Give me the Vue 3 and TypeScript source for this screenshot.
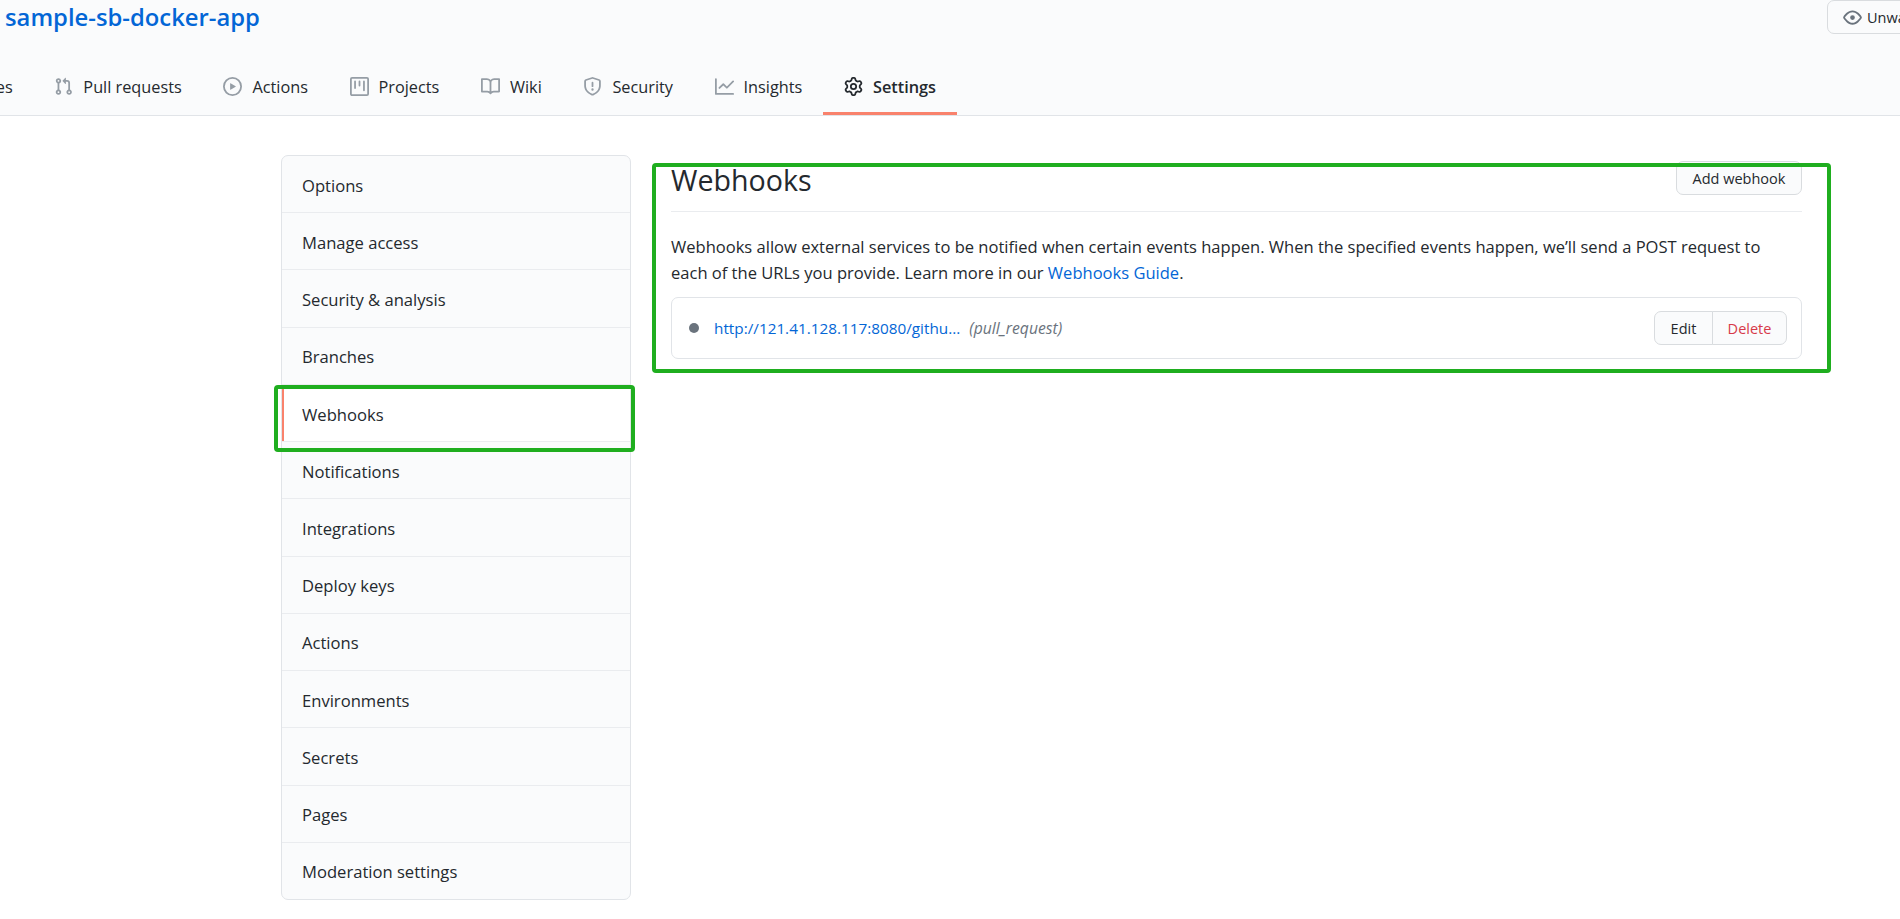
<script setup lang="ts">
interface Tab {
  name: string;
  path: string;
  active?: boolean;
}

const tabs: Tab[] = [
  { name: 'Issues', path: 'M8 9.5a1.5 1.5 0 100-3 1.5 1.5 0 000 3zM8 0a8 8 0 100 16A8 8 0 008 0zM1.5 8a6.5 6.5 0 1113 0 6.5 6.5 0 01-13 0z' },
  { name: 'Pull requests', path: 'M7.177 3.073L9.573.677A.25.25 0 0110 .854v4.792a.25.25 0 01-.427.177L7.177 3.427a.25.25 0 010-.354zM3.75 2.5a.75.75 0 100 1.5.75.75 0 000-1.5zm-2.25.75a2.25 2.25 0 113 2.122v5.256a2.251 2.251 0 11-1.5 0V5.372A2.25 2.25 0 011.5 3.25zM11 2.5h-1V4h1a1 1 0 011 1v5.628a2.251 2.251 0 101.5 0V5A2.5 2.5 0 0011 2.5zm1 10.25a.75.75 0 111.5 0 .75.75 0 01-1.5 0zM3.75 12a.75.75 0 100 1.5.75.75 0 000-1.5z' },
  { name: 'Actions', path: 'M1.5 8a6.5 6.5 0 1113 0 6.5 6.5 0 01-13 0zM8 0a8 8 0 100 16A8 8 0 008 0zM6.379 5.227A.25.25 0 006 5.442v5.117a.25.25 0 00.379.214l4.264-2.559a.25.25 0 000-.428L6.379 5.227z' },
  { name: 'Projects', path: 'M1.75 0A1.75 1.75 0 000 1.75v12.5C0 15.216.784 16 1.75 16h12.5A1.75 1.75 0 0016 14.25V1.75A1.75 1.75 0 0014.25 0H1.75zM1.5 1.75a.25.25 0 01.25-.25h12.5a.25.25 0 01.25.25v12.5a.25.25 0 01-.25.25H1.75a.25.25 0 01-.25-.25V1.75zM11.75 3a.75.75 0 00-.75.75v7.5a.75.75 0 001.5 0v-7.5a.75.75 0 00-.75-.75zm-8.25.75a.75.75 0 011.5 0v5.5a.75.75 0 01-1.5 0v-5.5zM8 3a.75.75 0 00-.75.75v3.5a.75.75 0 001.5 0v-3.5A.75.75 0 008 3z' },
  { name: 'Wiki', path: 'M0 1.75A.75.75 0 01.75 1h4.253c1.227 0 2.317.59 3 1.501A3.744 3.744 0 0111.006 1h4.245a.75.75 0 01.75.75v10.5a.75.75 0 01-.75.75h-4.507a2.25 2.25 0 00-1.591.659l-.622.621a.75.75 0 01-1.06 0l-.622-.621A2.25 2.25 0 005.258 13H.75a.75.75 0 01-.75-.75V1.75zm8.755 3a2.25 2.25 0 012.25-2.25H14.5v9h-3.757c-.71 0-1.4.201-1.992.572l.004-7.322zm-1.504 7.324l.004-5.073-.002-2.253A2.25 2.25 0 005.003 2.5H1.5v9h3.757a3.75 3.75 0 011.994.574z' },
  { name: 'Security', path: 'M7.467.133a1.75 1.75 0 011.066 0l5.25 1.68A1.75 1.75 0 0115 3.48V7c0 1.566-.32 3.182-1.303 4.682-.983 1.498-2.585 2.813-5.032 3.855a1.7 1.7 0 01-1.33 0c-2.447-1.042-4.049-2.357-5.032-3.855C1.32 10.182 1 8.566 1 7V3.48a1.75 1.75 0 011.217-1.667l5.25-1.68zm.61 1.429a.25.25 0 00-.153 0l-5.25 1.68a.25.25 0 00-.174.238V7c0 1.358.275 2.666 1.057 3.86.784 1.194 2.121 2.34 4.366 3.297a.2.2 0 00.154 0c2.245-.956 3.582-2.104 4.366-3.298C13.225 9.666 13.5 8.36 13.5 7V3.48a.25.25 0 00-.174-.237l-5.25-1.68zM9 10.5a1 1 0 11-2 0 1 1 0 012 0zm-.25-5.75a.75.75 0 10-1.5 0v3a.75.75 0 001.5 0v-3z' },
  { name: 'Insights', path: 'M1.5 1.75a.75.75 0 00-1.5 0v12.5c0 .414.336.75.75.75h14.5a.75.75 0 000-1.5H1.5V1.75zm14.28 2.53a.75.75 0 00-1.06-1.06L10 7.94 7.53 5.47a.75.75 0 00-1.06 0L3.22 8.72a.75.75 0 001.06 1.06L7 7.06l2.47 2.47a.75.75 0 001.06 0l5.25-5.25z' },
  { name: 'Settings', active: true, path: 'M7.429 1.525a6.593 6.593 0 011.142 0c.036.003.108.036.137.146l.289 1.105c.147.56.55.967.997 1.189.174.086.341.183.501.29.417.278.97.423 1.53.27l1.102-.303c.11-.03.175.016.195.046.219.31.41.641.573.989.014.031.022.11-.059.19l-.815.806c-.411.406-.562.957-.53 1.456a4.588 4.588 0 010 .582c-.032.499.119 1.05.53 1.456l.815.806c.08.08.073.159.059.19a6.494 6.494 0 01-.573.99c-.02.029-.086.074-.195.045l-1.103-.303c-.559-.153-1.112-.008-1.529.27-.16.107-.327.204-.5.29-.449.222-.851.628-.998 1.189l-.289 1.105c-.029.11-.101.143-.137.146a6.613 6.613 0 01-1.142 0c-.036-.003-.108-.037-.137-.146l-.289-1.105c-.147-.56-.55-.967-.997-1.189a4.502 4.502 0 01-.501-.29c-.417-.278-.97-.423-1.53-.27l-1.102.303c-.11.03-.175-.016-.195-.046a6.492 6.492 0 01-.573-.989c-.014-.031-.022-.11.059-.19l.815-.806c.411-.406.562-.957.53-1.456a4.587 4.587 0 010-.582c.032-.499-.119-1.05-.53-1.456l-.815-.806c-.08-.08-.073-.159-.059-.19a6.44 6.44 0 01.573-.99c.02-.029.086-.075.195-.045l1.103.303c.559.153 1.112.008 1.529-.27.16-.107.327-.204.5-.29.449-.222.851-.628.998-1.189l.289-1.105c.029-.11.101-.143.137-.146zM8 0c-.236 0-.47.01-.701.03-.743.065-1.29.615-1.458 1.261l-.29 1.106c-.017.066-.078.158-.211.224a5.994 5.994 0 00-.668.386c-.123.082-.233.09-.3.071L3.27 2.776c-.644-.177-1.392.02-1.82.63a7.977 7.977 0 00-.704 1.217c-.315.675-.111 1.422.363 1.891l.815.806c.05.048.098.147.088.294a6.084 6.084 0 000 .772c.01.147-.038.246-.088.294l-.815.806c-.474.469-.678 1.216-.363 1.891.2.428.436.835.704 1.218.428.609 1.176.806 1.82.63l1.103-.303c.066-.019.176-.011.299.071.213.143.436.272.668.386.133.066.194.158.212.224l.289 1.106c.169.646.715 1.196 1.458 1.26a8.094 8.094 0 001.402 0c.743-.064 1.29-.614 1.458-1.26l.29-1.106c.017-.066.078-.158.211-.224a5.98 5.98 0 00.668-.386c.123-.082.233-.09.3-.071l1.102.302c.644.177 1.392-.02 1.82-.63.268-.382.505-.789.704-1.217.315-.675.111-1.422-.364-1.891l-.814-.806c-.05-.048-.098-.147-.088-.294a6.1 6.1 0 000-.772c-.01-.147.039-.246.088-.294l.814-.806c.475-.469.679-1.216.364-1.891a7.992 7.992 0 00-.704-1.218c-.428-.609-1.176-.806-1.82-.63l-1.103.303c-.066.019-.176.011-.299-.071a5.991 5.991 0 00-.668-.386c-.133-.066-.194-.158-.212-.224L10.16 1.29C9.99.645 9.444.095 8.701.031A8.094 8.094 0 008 0zm1.5 8a1.5 1.5 0 11-3 0 1.5 1.5 0 013 0zM11 8a3 3 0 11-6 0 3 3 0 016 0z' },
];

const menuItems = [
  'Options',
  'Manage access',
  'Security & analysis',
  'Branches',
  'Webhooks',
  'Notifications',
  'Integrations',
  'Deploy keys',
  'Actions',
  'Environments',
  'Secrets',
  'Pages',
  'Moderation settings',
];
</script>

<template>
  <div class="page">
    <header class="repo-head">
      <div class="title-row">
        <a class="repo-name">sample-sb-docker-app</a>
        <button class="watch-btn">
          <svg viewBox="0 0 16 16" width="19" height="19"><path fill="#6a737d" fill-rule="evenodd" d="M1.679 7.932c.412-.621 1.242-1.75 2.366-2.717C5.175 4.242 6.527 3.5 8 3.5c1.473 0 2.824.742 3.955 1.715 1.124.967 1.954 2.096 2.366 2.717a.119.119 0 010 .136c-.412.621-1.242 1.75-2.366 2.717C10.825 11.758 9.473 12.5 8 12.5c-1.473 0-2.824-.742-3.955-1.715C2.92 9.818 2.09 8.69 1.679 8.068a.119.119 0 010-.136zM8 2c-1.981 0-3.67.992-4.933 2.078C1.797 5.169.88 6.423.43 7.1a1.619 1.619 0 000 1.798c.45.678 1.367 1.932 2.637 3.024C4.329 13.008 6.019 14 8 14c1.981 0 3.67-.992 4.933-2.078 1.27-1.091 2.187-2.345 2.637-3.023a1.619 1.619 0 000-1.798c-.45-.678-1.367-1.932-2.637-3.023C11.671 2.992 9.981 2 8 2zm0 8a2 2 0 100-4 2 2 0 000 4z" /></svg>
          <span>Unwatch</span>
        </button>
      </div>
      <nav class="tabs">
        <a v-for="tab in tabs" :key="tab.name" class="tab" :class="{ active: tab.active }">
          <svg viewBox="0 0 16 16" width="19" height="19"><path fill="currentColor" fill-rule="evenodd" :d="tab.path" /></svg>
          <span>{{ tab.name }}</span>
        </a>
      </nav>
    </header>

    <main class="layout">
      <aside class="menu">
        <a v-for="item in menuItems" :key="item" class="menu-item" :class="{ selected: item === 'Webhooks' }">{{ item }}</a>
      </aside>
      <section class="content">
        <div class="subhead">
          <h2>Webhooks</h2>
          <button class="btn">Add webhook</button>
        </div>
        <p class="intro">
          Webhooks allow external services to be notified when certain events happen. When the specified events happen, we’ll send a POST request to each of the URLs you provide. Learn more in our <a>Webhooks Guide</a>.
        </p>
        <div class="hook-row">
          <span class="dot"></span>
          <a class="hook-url">http://121.41.128.117:8080/githu...</a>
          <em class="hook-event">(pull_request)</em>
          <div class="btn-group">
            <button class="group-btn">Edit</button>
            <button class="group-btn danger">Delete</button>
          </div>
        </div>
      </section>
    </main>

    <div class="mark mark-menu"></div>
    <div class="mark mark-content"></div>
  </div>
</template>

<style scoped>
.page {
  position: relative;
  height: 919px;
  overflow: hidden;
  background: #fff;
  color: #24292e;
  font-family: "Open Sans", "Liberation Sans", sans-serif;
  font-size: 16.6px;
}

.repo-head {
  height: 116px;
  box-sizing: border-box;
  background: #fafbfc;
  border-bottom: 1px solid #e1e4e8;
}

.title-row {
  display: flex;
  justify-content: space-between;
  align-items: flex-start;
  height: 62px;
  padding-left: 5px;
}

.repo-name {
  color: #0366d6;
  font-size: 23.8px;
  font-weight: 600;
  line-height: 34px;
}

.watch-btn {
  display: flex;
  align-items: center;
  gap: 5px;
  width: 120px;
  height: 34px;
  margin-right: -47px;
  padding: 0 15px;
  border: 1px solid #d9dcdf;
  border-radius: 7px;
  background: #fafbfc;
  color: #24292e;
  font: inherit;
  font-size: 14.5px;
}

.tabs {
  display: flex;
  margin-left: -84px;
  height: 53px;
  font-size: 16.3px;
}

.tab {
  display: flex;
  align-items: center;
  gap: 10px;
  padding: 0 20.8px 1px;
  color: #24292e;
  border-bottom: 3px solid transparent;
  box-sizing: border-box;
  height: 53px;
}

.tab svg {
  color: #959da5;
}

.tab.active {
  font-weight: 600;
  border-bottom-color: #f9826c;
}

.tab.active svg {
  color: #24292e;
}

.layout {
  display: flex;
  gap: 40px;
  padding: 39px 0 0 281px;
}

.menu {
  display: flex;
  flex-direction: column;
  width: 350px;
  height: 745px;
  box-sizing: border-box;
  border: 1px solid #e1e4e8;
  border-radius: 7px;
  background: #fafbfc;
  overflow: hidden;
}

.menu-item {
  display: flex;
  align-items: center;
  flex: 1;
  padding: 2px 0 0 20px;
  border-bottom: 1px solid #eaecef;
}

.menu-item:last-child {
  border-bottom: 0;
}

.menu-item.selected {
  background: #fff;
  box-shadow: inset 2px 0 0 #f9826c;
}

.content {
  width: 1131px;
}

.subhead {
  display: flex;
  justify-content: space-between;
  align-items: flex-start;
  height: 56px;
  border-bottom: 1px solid #eaecef;
}

.subhead h2 {
  margin: 0;
  font-size: 28.6px;
  font-weight: 400;
  line-height: 50px;
}

.btn {
  width: 126px;
  height: 34px;
  margin-top: 6px;
  border: 1px solid #d9dcdf;
  border-radius: 7px;
  background: #fafbfc;
  color: #24292e;
  font: inherit;
  font-size: 14.5px;
}

.intro {
  margin: 22px 0 0;
  padding-right: 20px;
  font-size: 16.55px;
  line-height: 26px;
}

.intro a {
  color: #0366d6;
}

.hook-row {
  display: flex;
  align-items: center;
  height: 62px;
  box-sizing: border-box;
  margin-top: 11px;
  padding: 0 14px 0 17px;
  border: 1px solid #e1e4e8;
  border-radius: 7px;
}

.dot {
  width: 10px;
  height: 10px;
  border-radius: 50%;
  background: #6a737d;
  margin-right: 15px;
}

.hook-url {
  color: #0366d6;
  font-size: 15.3px;
}

.hook-event {
  margin-left: 9px;
  color: #6a737d;
  font-size: 15.7px;
}

.btn-group {
  display: flex;
  margin-left: auto;
}

.group-btn {
  height: 34px;
  width: 59px;
  border: 1px solid #d9dcdf;
  border-radius: 7px 0 0 7px;
  background: #fafbfc;
  color: #24292e;
  font: inherit;
  font-size: 14.5px;
}

.group-btn.danger {
  width: 75px;
  margin-left: -1px;
  border-radius: 0 7px 7px 0;
  color: #d73a49;
}

.mark {
  position: absolute;
  box-sizing: border-box;
  border: 4px solid #1fae1f;
  border-radius: 4px;
}

.mark-menu {
  left: 274px;
  top: 385px;
  width: 361px;
  height: 67px;
}

.mark-content {
  left: 652px;
  top: 163px;
  width: 1179px;
  height: 210px;
}
</style>

<style>
html,
body {
  margin: 0;
  overflow: hidden;
}
</style>
